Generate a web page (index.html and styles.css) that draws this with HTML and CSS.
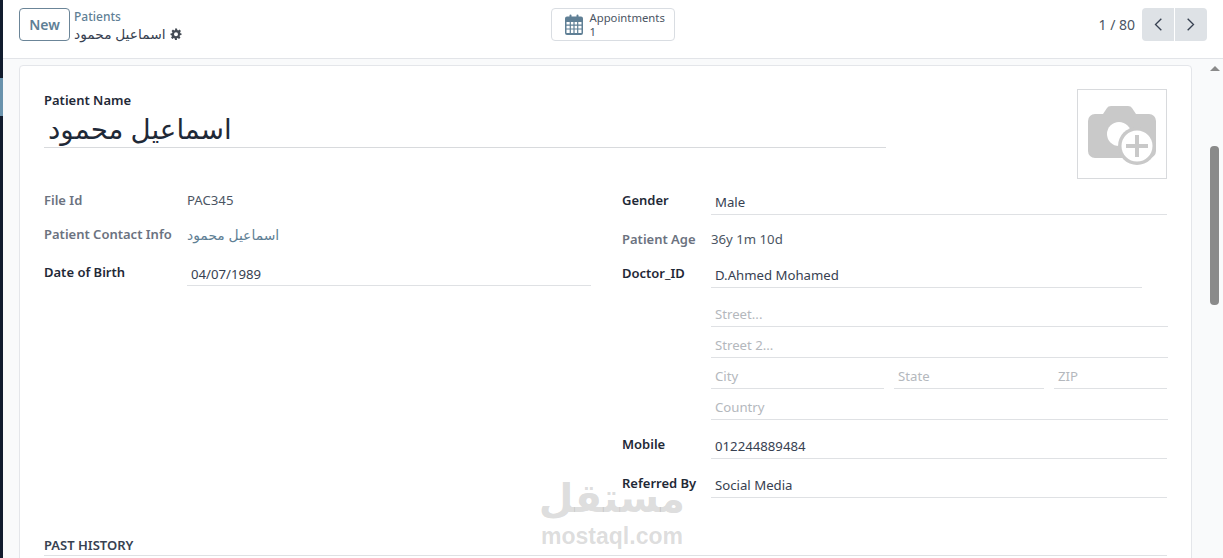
FILE: index.html
```html
<!DOCTYPE html>
<html lang="en">
<head>
  <meta charset="UTF-8" />
  <meta name="viewport" content="width=device-width, initial-scale=1.0" />
  <title>Patients</title>
  <link rel="stylesheet" href="styles.css">
</head>
<body>
  <div class="app">
    <div class="rail"><span class="rail-active"></span></div>
    <div class="main">
      <header class="control-panel">
        <div class="cp-left">
          <button class="btn-new">New</button>
          <div class="crumbs">
            <a class="crumb-link">Patients</a>
            <div class="crumb-current">
              <span dir="rtl">اسماعيل محمود</span>
              <svg class="gear" viewBox="0 0 24 24" width="12" height="12"><path fill="#444b54" fill-rule="evenodd" d="M10 1h4l.6 3.100 1.900.8 2.600-1.800 2.800 2.800-1.800 2.600.8 1.900L23 11v3l-3.100.6-.8 1.900 1.800 2.600-2.800 2.800-2.600-1.800-1.900.8L14 23.900h-4l-.6-3-1.900-.8-2.600 1.800-2.800-2.800 1.800-2.600-.8-1.900L1 14v-3l3.100-.6.8-1.900-1.800-2.600 2.800-2.800 2.600 1.800 1.900-.8zM12 8.500a4 4 0 1 0 0 8 4 4 0 0 0 0-8z"/></svg>
            </div>
          </div>
        </div>
        <div class="cp-center">
          <div class="stat-btn">
            <svg class="cal" viewBox="0 0 22 22" width="22" height="22">
              <path fill="#5f7f95" fill-rule="evenodd" d="M4 2.500h2.500V1.500a1 1 0 0 1 2 0v1h5v-1a1 1 0 0 1 2 0v1H18a2 2 0 0 1 2 2V19a2 2 0 0 1-2 2H4a2 2 0 0 1-2-2V4.500a2 2 0 0 1 2-2zM3.500 8v2.500h3.200V8zm4.400 0v2.500h2.500V8zm3.700 0v2.500h2.500V8zm3.700 0v2.500h3.200V8zM3.500 11.700v2.700h3.200v-2.700zm4.400 0v2.700h2.500v-2.700zm3.700 0v2.700h2.500v-2.700zm3.700 0v2.700h3.200v-2.700zM3.500 15.600v3.400h3.200v-3.400zm4.400 0v3.400h2.500v-3.400zm3.700 0v3.400h2.500v-3.400zm3.700 0v3.400h3.200v-3.400z"/>
            </svg>
            <div class="stat-text"><span>Appointments</span><span>1</span></div>
          </div>
        </div>
        <div class="cp-right">
          <span class="pager-count">1 / 80</span>
          <div class="pager-btns">
            <button class="pager-btn"><svg viewBox="0 0 12 18" width="10" height="15"><path d="M10 2 3 9l7 7" fill="none" stroke="#374151" stroke-width="1.6"/></svg></button>
            <button class="pager-btn"><svg viewBox="0 0 12 18" width="10" height="15"><path d="m2 2 7 7-7 7" fill="none" stroke="#374151" stroke-width="1.6"/></svg></button>
          </div>
        </div>
      </header>

      <div class="content">
        <div class="sheet-wrap">
          <main class="sheet">
            <div class="title-row">
              <div class="title-block">
                <label class="title-label">Patient Name</label>
                <div class="title-value"><span dir="rtl">اسماعيل محمود</span></div>
              </div>
              <div class="avatar">
                <svg viewBox="0 0 68 59" width="68" height="59">
                  <path fill="#c9c9c9" d="M7 8h8l4-6q1-2 4-2h17q3 0 4 2l4 6h13a7 7 0 0 1 7 7v30a7 7 0 0 1-7 7H7a7 7 0 0 1-7-7V15a7 7 0 0 1 7-7z"/>
                  <circle cx="31" cy="28" r="12" fill="#fff"/>
                  <circle cx="49" cy="40" r="19" fill="#c9c9c9"/>
                  <circle cx="49" cy="40" r="15.500" fill="#fff"/>
                  <path d="M49 29v22M38 40h22" stroke="#c9c9c9" stroke-width="4" fill="none"/>
                </svg>
              </div>
            </div>

            <div class="columns">
              <div class="col-left">
                <div class="row row-file">
                  <span class="lbl lbl-muted">File Id</span>
                  <span class="val">PAC345</span>
                </div>
                <div class="row row-contact">
                  <span class="lbl lbl-muted">Patient Contact Info</span>
                  <span class="val val-link" dir="rtl">اسماعيل محمود</span>
                </div>
                <div class="row row-dob">
                  <span class="lbl">Date of Birth</span>
                  <span class="input">04/07/1989</span>
                </div>
              </div>
              <div class="col-right">
                <div class="row row-gender">
                  <span class="lbl">Gender</span>
                  <span class="input">Male</span>
                </div>
                <div class="row row-age">
                  <span class="lbl lbl-muted">Patient Age</span>
                  <span class="val">36y 1m 10d</span>
                </div>
                <div class="row row-doctor">
                  <span class="lbl">Doctor_ID</span>
                  <span class="input input-short">D.Ahmed Mohamed</span>
                </div>
                <div class="address">
                  <span class="input ph">Street...</span>
                  <span class="input ph">Street 2...</span>
                  <div class="address-line">
                    <span class="input ph">City</span>
                    <span class="input ph">State</span>
                    <span class="input ph">ZIP</span>
                  </div>
                  <span class="input ph">Country</span>
                </div>
                <div class="row row-mobile">
                  <span class="lbl">Mobile</span>
                  <span class="input">012244889484</span>
                </div>
                <div class="row row-ref">
                  <span class="lbl">Referred By</span>
                  <span class="input">Social Media</span>
                </div>
              </div>
            </div>

            <h4 class="section-title">PAST HISTORY</h4>
          </main>
        </div>
        <div class="scrollbar">
          <span class="arrow-up"></span>
          <span class="thumb"></span>
        </div>
      </div>
    </div>
  </div>

  <div class="watermark">
    <div class="wm-ar" dir="rtl">مستقل</div>
    <div class="wm-en">mostaql.com</div>
  </div>
</body>
</html>
```

FILE: styles.css
```css
* {
  box-sizing: border-box;
}
body {
  margin: 0;
  font-family: "Noto Sans", "DejaVu Sans", sans-serif;
  font-size: 13.2px;
  color: #374151;
  background: #fff;
  overflow: hidden;
}
.app {
  display: flex;
  height: 558px;
}
.rail {
  width: 3px;
  background: #111c2e;
  padding-top: 78px;
}
.rail-active {
  display: block;
  height: 38px;
  background: #6a93ad;
}
.main {
  flex: 1;
  min-width: 0;
  display: flex;
  flex-direction: column;
}

/* top bar */
.control-panel {
  height: 59px;
  flex-shrink: 0;
  border-bottom: 1px solid #e2e4e8;
  display: grid;
  grid-template-columns: 1fr auto 1fr;
  align-items: start;
  padding: 8px 16px 0 16px;
  background: #fff;
}
.cp-left {
  display: flex;
  gap: 4px;
}
.btn-new {
  width: 51px;
  height: 33px;
  font: 600 14px "Noto Sans", sans-serif;
  color: #5f7f95;
  background: #fff;
  border: 1px solid #6b8598;
  border-radius: 4px;
  padding: 0;
}
.crumbs {
  line-height: 17px;
}
.crumb-link {
  display: block;
  font-size: 12px;
  font-weight: 500;
  color: #5f7f95;
}
.crumb-current {
  display: flex;
  align-items: center;
  gap: 4px;
  color: #374151;
  font-size: 13.800px;
}
.cp-center {
  display: flex;
  justify-content: center;
  padding-right: 1px;
}
.stat-btn {
  width: 124px;
  height: 33px;
  border: 1px solid #d9dde2;
  border-radius: 4px;
  display: flex;
  align-items: center;
  gap: 5px;
  padding-left: 11px;
}
.stat-text {
  display: flex;
  flex-direction: column;
  font-size: 11.300px;
  line-height: 14px;
  color: #4b5563;
}
.cp-right {
  display: flex;
  justify-content: flex-end;
  align-items: center;
  gap: 7px;
  height: 33px;
}
.pager-count {
  font-size: 14px;
  color: #4b5563;
}
.pager-btns {
  display: flex;
  gap: 1px;
}
.pager-btn {
  width: 32px;
  height: 33px;
  padding: 0;
  border: 0;
  background: #dee2e6;
  display: flex;
  align-items: center;
  justify-content: center;
}
.pager-btn:first-child {
  border-radius: 4px 0 0 4px;
}
.pager-btn:last-child {
  border-radius: 0 4px 4px 0;
}

/* form sheet */
.content {
  flex: 1;
  min-height: 0;
  display: flex;
  background: #f9fafb;
}
.sheet-wrap {
  flex: 1;
  min-width: 0;
  padding: 6px 15px 0 16px;
  overflow: hidden;
}
.sheet {
  height: 600px;
  background: #fff;
  border: 1px solid #e4e6ea;
  border-radius: 4px;
  padding: 23px 24px 0 24px;
}
.title-row {
  display: flex;
  justify-content: space-between;
  align-items: flex-start;
}
.title-block {
  width: 842px;
  border-bottom: 1px solid #d8dadd;
  height: 59px;
}
.title-label {
  display: block;
  font-size: 13px;
  font-weight: 600;
  line-height: 22px;
  color: #1f2937;
}
.title-value {
  font-size: 27.700px;
  line-height: 34px;
  color: #1f2937;
  padding-left: 4px;
  display: flex;
}
.avatar {
  width: 90px;
  height: 90px;
  border: 1px solid #d8dadd;
  display: flex;
  align-items: center;
  justify-content: center;
  padding-top: 2px;
}
.columns {
  display: grid;
  grid-template-columns: 547px 546px;
  column-gap: 31px;
}
.row {
  display: grid;
  align-items: start;
}
.col-left .row {
  grid-template-columns: 143px 404px;
}
.col-right .row {
  grid-template-columns: 89px 456px;
}
.lbl {
  font-size: 13px;
  font-weight: 600;
  line-height: 20px;
  color: #1f2937;
}
.lbl-muted {
  color: #6b7280;
}
.val {
  line-height: 20px;
  color: #4b5563;
}
.val-link {
  font-size: 13.900px;
  padding-top: 1px;
  color: #5f7f95;
  text-align: right;
  justify-self: start;
}
.input {
  display: block;
  height: 25px;
  line-height: 24px;
  padding: 0 4px;
  border-bottom: 1px solid #dfe1e4;
  color: #374151;
}
.input-short {
  width: 431px;
}
.ph {
  color: #b4b8bd;
}
.col-left {
  padding-top: 11px;
}
.row-contact {
  margin-top: 14px;
}
.row-dob {
  margin-top: 17px;
}
.row-dob .input {
  height: 24px;
}
.col-right {
  padding-top: 11px;
}
.row-age {
  margin-top: 14px;
}
.row-doctor {
  margin-top: 14px;
}
.address {
  margin: 14px 0 0 89px;
  display: flex;
  flex-direction: column;
  gap: 6px;
}
.address-line {
  display: grid;
  grid-template-columns: 173px 150px 113px;
  column-gap: 10px;
}
.row-mobile {
  margin-top: 14px;
}
.row-ref {
  margin-top: 14px;
}
.section-title {
  margin: 38px 0 0;
  height: 20px;
  font-size: 13px;
  font-weight: 600;
  line-height: 19px;
  color: #374151;
  border-bottom: 1px solid #dfe1e4;
}

/* scrollbar */
.scrollbar {
  width: 16px;
  flex-shrink: 0;
  background: #f9fafb;
  padding: 7px 0 0 3px;
}
.arrow-up {
  display: block;
  width: 0;
  border-left: 5px solid transparent;
  border-right: 5px solid transparent;
  border-bottom: 5px solid #8a8a8a;
}
.thumb {
  display: block;
  width: 9px;
  height: 159px;
  margin-top: 75px;
  border-radius: 4px;
  background: #8a8a8a;
}

/* site watermark over the page */
.watermark {
  position: absolute;
  left: 538px;
  top: 473px;
  width: 148px;
  text-align: center;
  color: rgba(150, 150, 150, 0.32);
  font-family: "Liberation Sans", "DejaVu Sans", sans-serif;
  font-weight: 700;
  pointer-events: none;
}
.wm-ar {
  font-size: 40px;
  line-height: 51px;
}
.wm-en {
  font-size: 23px;
  line-height: 24px;
}
```
